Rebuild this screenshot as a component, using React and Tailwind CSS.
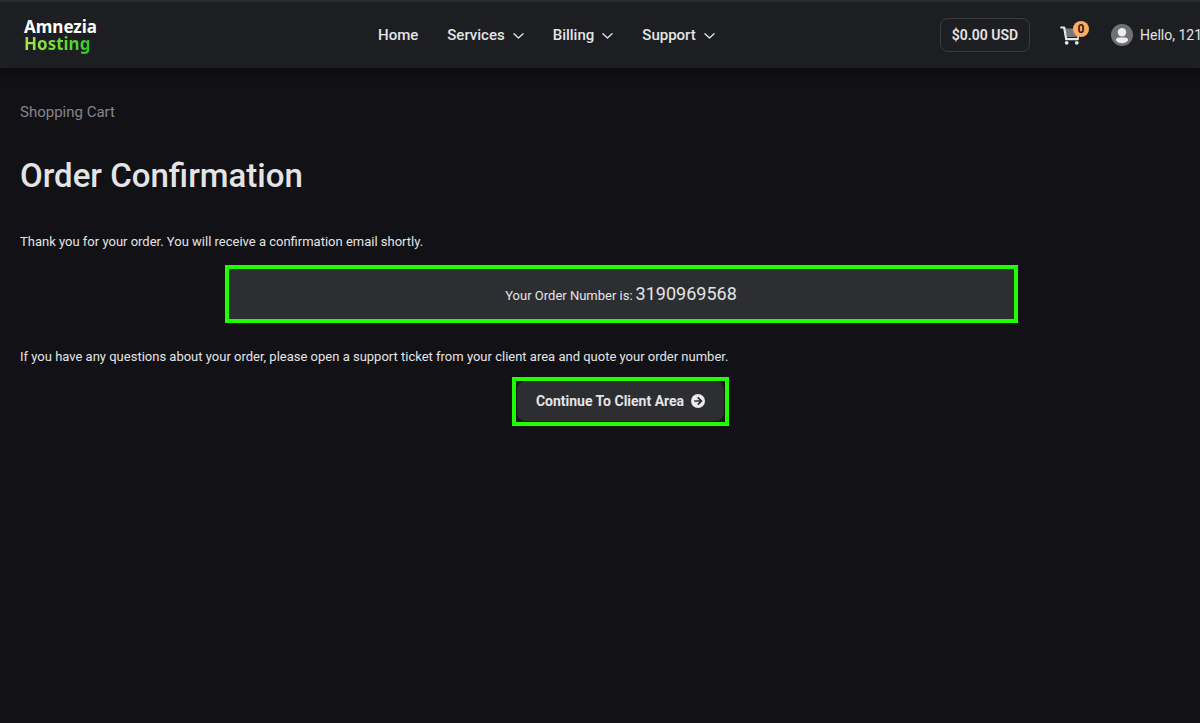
const menus = ['Services', 'Billing', 'Support'];

function Chevron() {
  return (
    <svg className="h-[11px] w-[11px] shrink-0" viewBox="0 0 12 12" fill="none" stroke="currentColor" strokeWidth="1.4" strokeLinecap="round" strokeLinejoin="round" aria-hidden="true">
      <path d="M1 4 6 8.8 11 4" />
    </svg>
  );
}

function CartIcon() {
  return (
    <svg className="h-5 w-5" viewBox="0 0 20 20" fill="none" aria-hidden="true">
      <path d="M5 3.500H19l-2 8.500H7z" fill="#77787b" />
      <path d="M1.200 2.500h3L6.200 14.200H17.800" stroke="#e8e8e8" strokeWidth="2.200" strokeLinecap="round" strokeLinejoin="round" />
      <path d="M18.600 9.500 17.800 13.500" stroke="#e8e8e8" strokeWidth="1.600" strokeLinecap="round" />
      <circle cx="6.700" cy="17.800" r="1.900" fill="#e8e8e8" />
      <circle cx="16.800" cy="17.800" r="1.900" fill="#e8e8e8" />
    </svg>
  );
}

function UserIcon() {
  return (
    <svg className="h-[22px] w-[22px] shrink-0" viewBox="0 0 22 22" aria-hidden="true">
      <circle cx="11" cy="11" r="11" fill="#707174" />
      <circle cx="11" cy="8.300" r="4.200" fill="#ececec" />
      <path d="M4.800 16.200C4.800 14.500 6.300 13.600 8 13.600H14C15.700 13.600 17.200 14.500 17.200 16.200C15.900 18.100 13.600 19.200 11 19.200C8.400 19.200 6.100 18.100 4.800 16.200Z" fill="#ececec" />
    </svg>
  );
}

function ArrowCircle() {
  return (
    <svg className="h-[14px] w-[14px] shrink-0" viewBox="0 0 14 14" fill="none" aria-hidden="true">
      <circle cx="7" cy="7" r="7" fill="#ececec" />
      <path d="M3.200 7h7M6.800 3.400 10.400 7 6.800 10.600" stroke="#2d2e32" strokeWidth="1.700" />
    </svg>
  );
}

export default function App() {
  return (
    <div className="min-h-screen overflow-x-hidden bg-[#111116] font-['Roboto',sans-serif] text-[13px] text-[#e4e4e6]">
      <header className="grid h-[68px] grid-cols-[354px_1fr_auto] items-center border-t-2 border-b border-t-[#2a2b33] border-b-[#222326] bg-[#1d1e21] pl-6 shadow-[0_4px_12px_rgba(0,0,0,0.35)]">
        <a href="#" className="w-fit pt-1 font-['Noto_Sans',sans-serif] text-[17px] leading-[17px] font-bold text-white">
          <span className="block">Amnezia</span>
          <span className="block w-fit bg-linear-to-r from-[#a6e34b] to-[#22cf20] bg-clip-text pb-1 text-transparent">Hosting</span>
        </a>
        <nav className="flex items-center gap-[29px] pt-px text-[15px] font-medium">
          <a href="#">Home</a>
          {menus.map((name) => (
            <button key={name} type="button" className="flex items-center gap-2">
              {name}
              <Chevron />
            </button>
          ))}
        </nav>
        <div className="flex w-[260px] items-center text-sm whitespace-nowrap">
          <button type="button" className="h-[34px] w-[90px] shrink-0 rounded-lg border border-[#3a3b3f] font-semibold">$0.00 USD</button>
          <a href="#" aria-label="Cart, 0 items" className="relative ml-[30px] shrink-0">
            <CartIcon />
            <span className="absolute -top-1 left-[13px] flex h-4 w-4 items-center justify-center rounded-full bg-[#ffad5c] text-xs font-bold text-[#1d1e21]">0</span>
          </a>
          <a href="#" className="ml-[31px] flex shrink-0 items-center gap-[7px]">
            <UserIcon />
            Hello, 121
          </a>
        </div>
      </header>
      <main className="pl-5">
        <p className="pt-8 text-[15px] leading-6 text-[#85868b]">Shopping Cart</p>
        <h1 className="mt-8 text-[33px] leading-10 font-medium">Order Confirmation</h1>
        <p className="mt-9 leading-5">Thank you for your order. You will receive a confirmation email shortly.</p>
        <div className="-mr-5 mt-[13px] flex justify-center pl-[2px]">
          <p className="flex h-[58px] w-[793px] max-w-full items-baseline justify-center gap-[3px] border-4 border-[#1eff00] bg-[#2d2e32] pt-[11px]">
            Your Order Number is: <span className="text-lg">3190969568</span>
          </p>
        </div>
        <p className="mt-6 leading-5">If you have any questions about your order, please open a support ticket from your client area and quote your order number.</p>
        <div className="-mr-5 mt-[10px] flex justify-center pl-px">
          <div className="border-4 border-[#1eff00] px-px pb-px">
            <a href="#" className="flex h-10 items-center gap-[7px] rounded-lg bg-[#2d2e32] px-[19px] text-sm font-bold">
              Continue To Client Area
              <ArrowCircle />
            </a>
          </div>
        </div>
      </main>
    </div>
  );
}
